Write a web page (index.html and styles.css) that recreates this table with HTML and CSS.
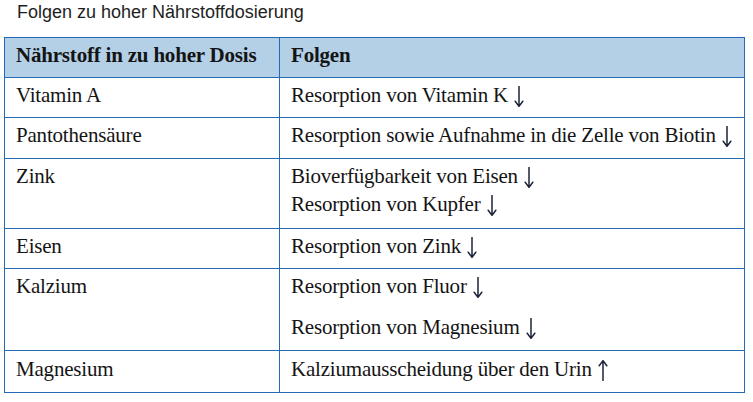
FILE: index.html
```html
<!DOCTYPE html>
<html lang="de">
<head>
<meta charset="utf-8">
<title>Folgen zu hoher Nährstoffdosierung</title>
<link rel="stylesheet" href="styles.css">
</head>
<body>
<div class="page">
  <h1 class="title">Folgen zu hoher Nährstoffdosierung</h1>
  <table class="tbl">
    <thead>
      <tr>
        <th class="c1">Nährstoff in zu hoher Dosis</th>
        <th class="c2">Folgen</th>
      </tr>
    </thead>
    <tbody>
      <tr>
        <td>Vitamin A</td>
        <td>Resorption von Vitamin K <svg class="arr" viewBox="0 0 10 21" width="10" height="21"><path d="M5 0.5V20.2M1.2 15.2L5 20.4L8.8 15.2"/></svg></td>
      </tr>
      <tr class="r-pan">
        <td>Pantothensäure</td>
        <td>Resorption sowie Aufnahme in die Zelle von Biotin <svg class="arr" viewBox="0 0 10 21" width="10" height="21"><path d="M5 0.5V20.2M1.2 15.2L5 20.4L8.8 15.2"/></svg></td>
      </tr>
      <tr class="r-zink">
        <td>Zink</td>
        <td>Bioverfügbarkeit von Eisen <svg class="arr" viewBox="0 0 10 21" width="10" height="21"><path d="M5 0.5V20.2M1.2 15.2L5 20.4L8.8 15.2"/></svg><br>Resorption von Kupfer <svg class="arr" viewBox="0 0 10 21" width="10" height="21"><path d="M5 0.5V20.2M1.2 15.2L5 20.4L8.8 15.2"/></svg></td>
      </tr>
      <tr>
        <td>Eisen</td>
        <td>Resorption von Zink <svg class="arr" viewBox="0 0 10 21" width="10" height="21"><path d="M5 0.5V20.2M1.2 15.2L5 20.4L8.8 15.2"/></svg></td>
      </tr>
      <tr class="r-kal">
        <td>Kalzium</td>
        <td><p class="para">Resorption von Fluor <svg class="arr" viewBox="0 0 10 21" width="10" height="21"><path d="M5 0.5V20.2M1.2 15.2L5 20.4L8.8 15.2"/></svg></p><p class="para">Resorption von Magnesium <svg class="arr" viewBox="0 0 10 21" width="10" height="21"><path d="M5 0.5V20.2M1.2 15.2L5 20.4L8.8 15.2"/></svg></p></td>
      </tr>
      <tr class="last">
        <td>Magnesium</td>
        <td>Kalziumausscheidung über den Urin <svg class="arr" viewBox="0 0 10 21" width="10" height="21"><path d="M5 20.5V0.8M1.2 5.8L5 0.6L8.8 5.8"/></svg></td>
      </tr>
    </tbody>
  </table>
</div>
</body>
</html>
```
FILE: styles.css
```css
html, body {
  margin: 0;
  padding: 0;
  background: #ffffff;
}

.page {
  padding: 2px 0 0 4px;
}

.title {
  margin: 0 0 0 13px;
  font-family: "Liberation Sans", Arial, sans-serif;
  font-weight: 400;
  font-size: 18px;
  line-height: 21px;
  color: #1e1e1e;
  height: 35px;
}

.tbl {
  border-collapse: collapse;
  width: 741px;
  font-family: "Liberation Serif", serif;
  font-size: 21px;
  letter-spacing: -0.2px;
  line-height: 28px;
  color: #141414;
}

.tbl th,
.tbl td {
  border: 1px solid #2469b3;
  padding: 3px 11px 8px 11px;
  text-align: left;
  vertical-align: top;
}

.tbl th {
  background: #b3d0e7;
  font-weight: 700;
}

.c1 {
  width: 252px;
}

.para {
  margin: 0;
}

.para + .para {
  margin-top: 13px;
}

.r-pan td {
  padding-bottom: 9px;
}

.r-zink td {
  padding-bottom: 10px;
}

.r-kal td {
  padding-bottom: 9px;
}

.last td {
  padding-top: 4px;
  padding-bottom: 9px;
}

.arr {
  display: inline-block;
  vertical-align: -5px;
  margin-left: 1px;
  fill: none;
  stroke: #1b2338;
  stroke-width: 1.5;
  stroke-linecap: round;
  stroke-linejoin: round;
}
```
